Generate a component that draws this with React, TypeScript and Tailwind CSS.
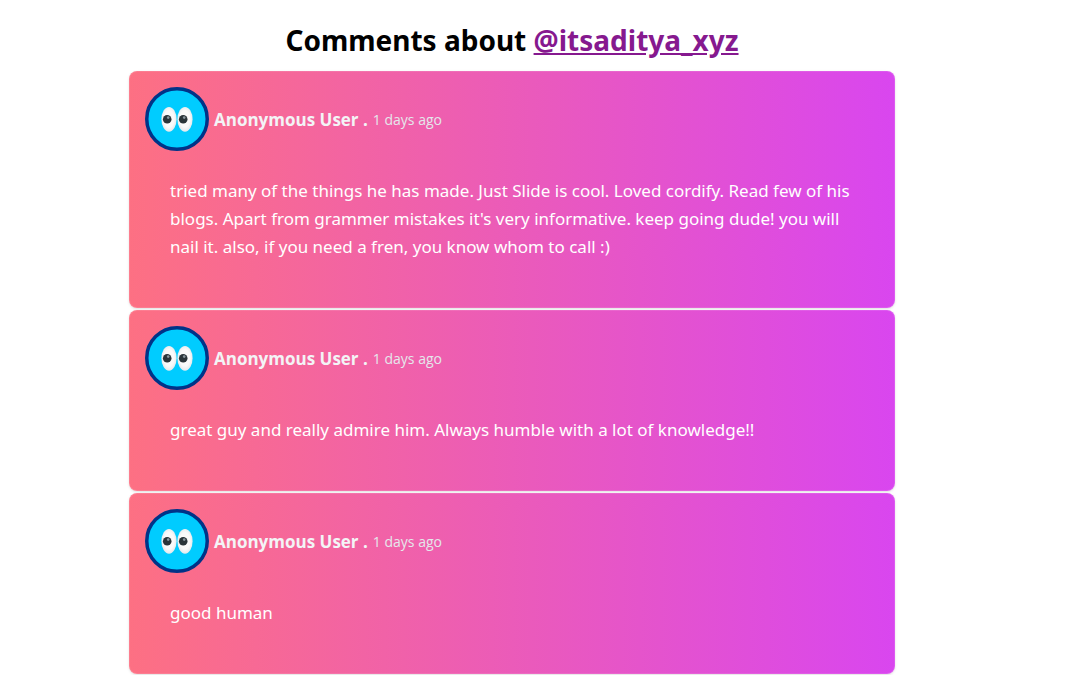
interface Comment {
  id: number;
  author: string;
  age: string;
  text: string;
}

const comments: Comment[] = [
  {
    id: 1,
    author: 'Anonymous User',
    age: '1 days ago',
    text: "tried many of the things he has made. Just Slide is cool. Loved cordify. Read few of his blogs. Apart from grammer mistakes it's very informative. keep going dude! you will nail it. also, if you need a fren, you know whom to call :)",
  },
  {
    id: 2,
    author: 'Anonymous User',
    age: '1 days ago',
    text: 'great guy and really admire him. Always humble with a lot of knowledge!!',
  },
  {
    id: 3,
    author: 'Anonymous User',
    age: '1 days ago',
    text: 'good human',
  },
];

function Avatar() {
  return (
    <svg viewBox="0 0 64 64" className="size-16 shrink-0" role="img" aria-label="Avatar">
      <defs>
        <radialGradient id="eyeWhite" cx="50%" cy="48%" r="55%">
          <stop offset="60%" stopColor="#fafafa" />
          <stop offset="100%" stopColor="#dfe6ea" />
        </radialGradient>
      </defs>
      <circle cx="32" cy="32" r="30.25" fill="#00ccff" stroke="#003388" strokeWidth="3.5" />
      <ellipse cx="24" cy="32.3" rx="7.6" ry="12.4" fill="url(#eyeWhite)" />
      <ellipse cx="40" cy="32.3" rx="7.6" ry="12.4" fill="url(#eyeWhite)" />
      <circle cx="22.2" cy="32.2" r="4.3" fill="#2a3439" />
      <circle cx="38.2" cy="32.2" r="4.3" fill="#2a3439" />
      <circle cx="23.2" cy="30.6" r="1.3" fill="#8a979e" />
      <circle cx="39.2" cy="30.6" r="1.3" fill="#8a979e" />
    </svg>
  );
}

function CommentCard({ comment }: { comment: Comment }) {
  return (
    <li className="rounded-lg border border-white/10 bg-linear-to-r/srgb from-[#fd7083] to-[#d946ef] bg-origin-border px-[15px] pt-[15px] pb-[46px] shadow-sm">
      <div className="flex items-center gap-[5px]">
        <Avatar />
        <div className="flex items-center gap-[5px] pt-0.5">
          <h2 className="text-[17px]/7 font-bold text-gray-100">{comment.author} .</h2>
          <span className="text-[14px]/7 text-gray-200">{comment.age}</span>
        </div>
      </div>
      <p className="mt-[26px] px-[25px] font-['Noto_Sans','Open_Sans',sans-serif] text-[17px]/7 text-white">
        {comment.text}
      </p>
    </li>
  );
}

export default function App() {
  return (
    <main className="min-h-screen max-w-5xl bg-white px-4 pt-4 font-['Open_Sans','Noto_Sans',sans-serif]">
      <h1 className="mb-[7px] text-center font-['Noto_Sans','Open_Sans',sans-serif] text-[28px]/[48px] font-bold text-black">
        Comments about{' '}
        <a href="#itsaditya_xyz" className="text-[#86198f] underline">
          @itsaditya_xyz
        </a>
      </h1>
      <ul className="mx-auto flex max-w-[766px] flex-col gap-0.5">
        {comments.map((comment) => (
          <CommentCard key={comment.id} comment={comment} />
        ))}
      </ul>
    </main>
  );
}
